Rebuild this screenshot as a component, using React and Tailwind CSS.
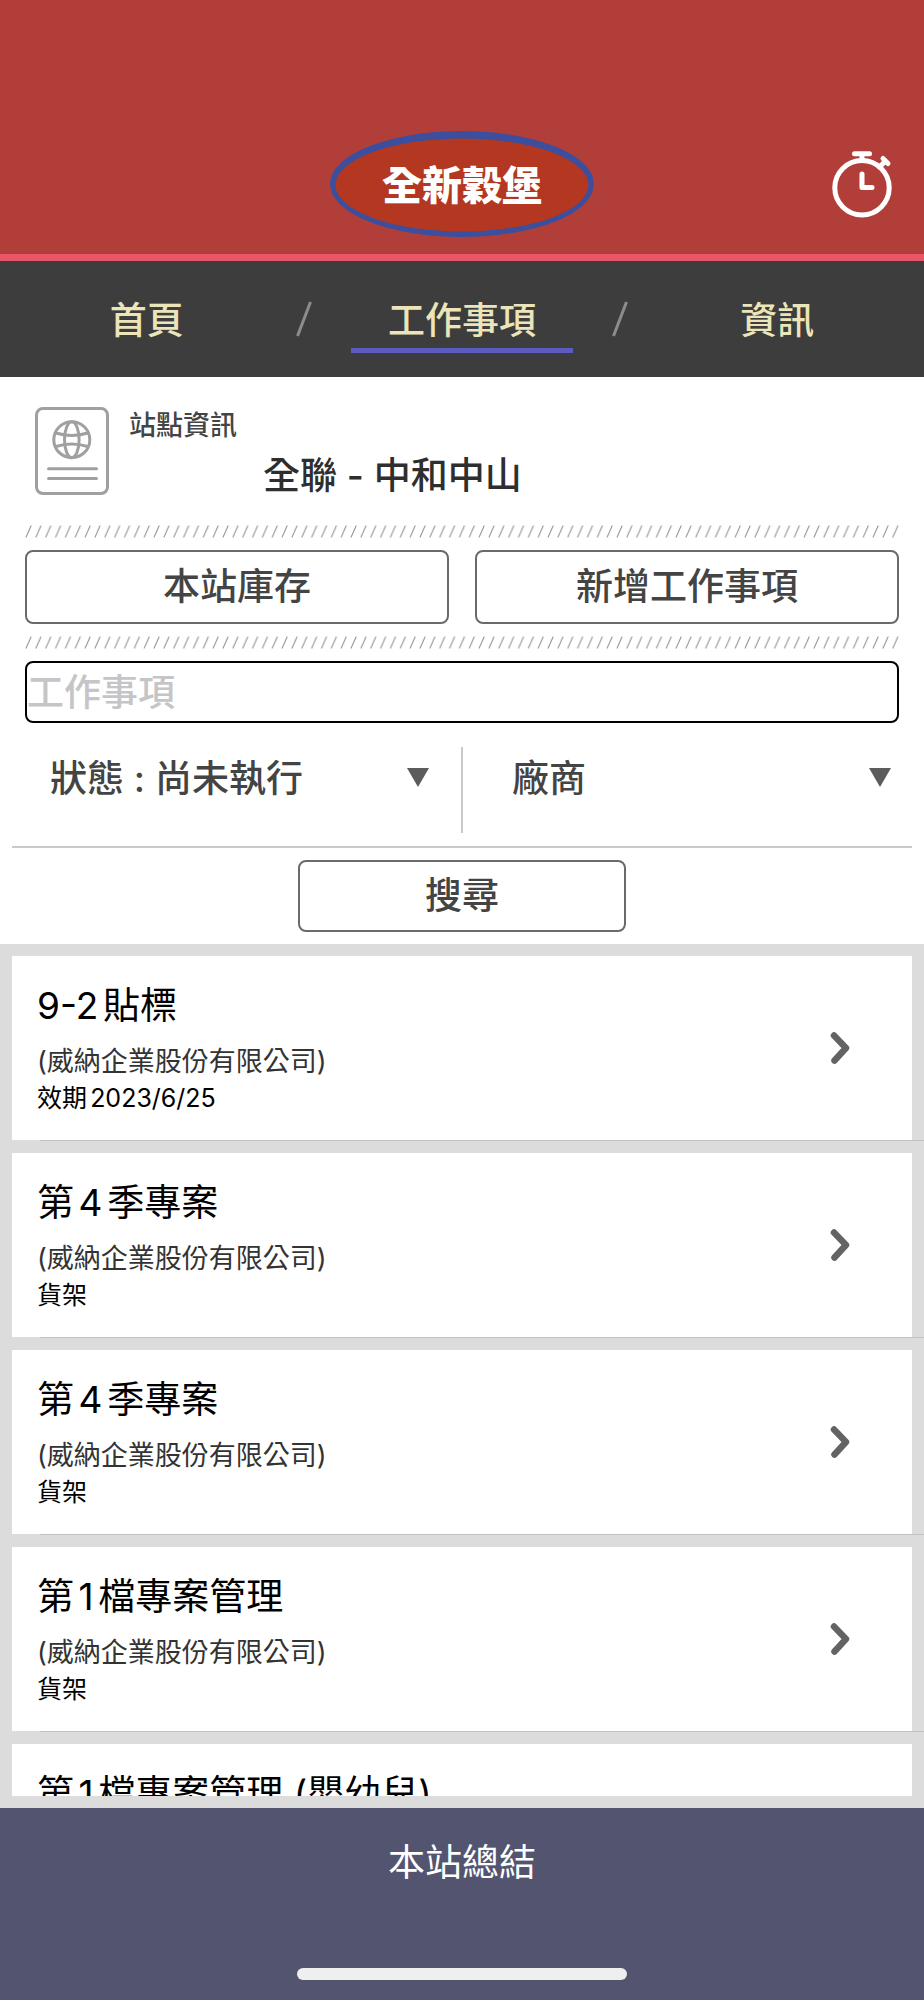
import React from "react";

const tasks = [
  { title: "9-2貼標", company: "(威納企業股份有限公司)", note: "效期2023/6/25" },
  { title: "第4季專案", company: "(威納企業股份有限公司)", note: "貨架" },
  { title: "第4季專案", company: "(威納企業股份有限公司)", note: "貨架" },
  { title: "第1檔專案管理", company: "(威納企業股份有限公司)", note: "貨架" },
  { title: "第1檔專案管理 (嬰幼兒)", company: "(威納企業股份有限公司)", note: "貨架" },
];

function Logo() {
  return (
    <svg width="266" height="108" viewBox="0 0 266 108" role="img" aria-label="全新穀堡">
      <ellipse cx="133" cy="54" rx="132" ry="53" fill="#3b4f9e" />
      <ellipse cx="133" cy="55" rx="126.500" ry="46.500" fill="#b43721" />
      <text
        x="133"
        y="70"
        textAnchor="middle"
        fill="#fff"
        fontSize="40"
        fontWeight="900"
      >
        全新穀堡
      </text>
    </svg>
  );
}

function Stopwatch() {
  return (
    <svg width="60" height="67" viewBox="0 0 60 67" fill="none" stroke="#fff" strokeWidth="5" strokeLinecap="round" strokeLinejoin="round" aria-hidden="true">
      <circle cx="30" cy="36.700" r="27.200" />
      <path d="M22.500 2.700H37.500M30 3v6" />
      <path d="M30 23v13.500h10" />
      <path d="M51 7.500l5 5M53.500 10l-6 6" strokeWidth="5" />
    </svg>
  );
}

function SiteIcon() {
  return (
    <svg width="74" height="88" viewBox="0 0 74 88" fill="none" stroke="#a0a0a0" strokeWidth="3" strokeLinecap="round" className="shrink-0" aria-hidden="true">
      <rect x="1.500" y="1.500" width="71" height="85" rx="6.500" />
      <circle cx="36.800" cy="32.700" r="18" />
      <ellipse cx="36.800" cy="32.700" rx="7.300" ry="18" />
      <path d="M21 26c9.500 3 22 3 31.600 0M21 39.500c9.500-3 22-3 31.600 0" />
      <path d="M13.500 61.700h48M13.500 71.500h48" />
    </svg>
  );
}

function Hatch({ id }) {
  return (
    <svg className="block h-[13px] w-full" aria-hidden="true">
      <defs>
        <pattern id={id} width="9.850" height="13" patternUnits="userSpaceOnUse">
          <path d="M.9 12.500L6.200.5" stroke="#8f8f8f" strokeWidth="1" fill="none" />
        </pattern>
      </defs>
      <rect width="100%" height="13" fill={`url(#${id})`} />
    </svg>
  );
}

function Filter({ label, options }) {
  return (
    <div className="relative flex-1">
      <select
        aria-label={label}
        className="h-[64px] w-full appearance-none bg-transparent pl-[50px] pr-16 font-medium text-[#444] outline-none"
      >
        {options.map((o) => (
          <option key={o}>{o}</option>
        ))}
      </select>
      <svg className="pointer-events-none absolute right-[33px] top-[21px]" width="22" height="19" viewBox="0 0 22 19" aria-hidden="true">
        <path d="M0 0h22L11 19z" fill="#5c5c5c" />
      </svg>
    </div>
  );
}

function TaskRow({ task }) {
  return (
    <li>
      <a href="#task" className="mx-3 flex h-[184px] items-center justify-between bg-white pl-[25px] pr-[62px]">
        <span className="flex flex-col pt-1 [text-autospace:normal]">
          <span className="mb-3.5 text-[37px] leading-[46px] text-black">{task.title}</span>
          <span className="text-[27px] leading-[37px] text-[#333]">{task.company}</span>
          <span className="text-[25px] leading-[37px] text-black">{task.note}</span>
        </span>
        <svg width="20" height="34" viewBox="0 0 20 34" fill="none" stroke="#636363" strokeWidth="6.500" strokeLinecap="round" strokeLinejoin="round" aria-hidden="true">
          <path d="M4 4.500L16 17 4.500 29.500" />
        </svg>
      </a>
      <div className="ml-10 h-px bg-[#c2c2c2]" />
    </li>
  );
}

function NavSlash() {
  return (
    <svg width="22" height="36" viewBox="0 0 22 36" className="shrink-0" aria-hidden="true">
      <path d="M4.500 35L17.500 1" stroke="#8c8c8c" strokeWidth="3" />
    </svg>
  );
}

const buttonStyle = "rounded-lg border-2 border-[#6a6a6a] bg-white font-medium text-[#444]";

export default function App() {
  return (
    <div className="flex h-screen flex-col bg-white font-[Inter,'Noto_Sans_CJK_TC',sans-serif] text-[37px] leading-[46px]">
      <header className="grid grid-cols-[1fr_auto_1fr] items-center border-b-[7px] border-[#e9566a] bg-[#b23e3a] pb-4 pt-[130px]">
        <span className="col-start-2">
          <Logo />
        </span>
        <button type="button" aria-label="打卡" className="mr-8 justify-self-end">
          <Stopwatch />
        </button>
      </header>

      <nav className="flex h-[116px] shrink-0 items-center bg-[#3d3d3d] font-medium text-[#ebe5b9]">
        <a href="#home" className="flex-1 border-b-[5px] border-transparent pb-1 pt-3 text-center">首頁</a>
        <NavSlash />
        <div className="flex flex-1 justify-center">
          <a href="#tasks" aria-current="page" className="border-b-[5px] border-[#5b5bc0] px-[37px] pb-1 pt-3">工作事項</a>
        </div>
        <NavSlash />
        <a href="#info" className="flex-1 border-b-[5px] border-transparent pb-1 pt-3 text-center">資訊</a>
      </nav>

      <main className="flex min-h-0 flex-1 flex-col">
        <section className="px-[25px] pt-[30px]">
          <div className="flex gap-5 pl-2.5">
            <SiteIcon />
            <div>
              <p className="text-[27px] font-medium leading-[38px] text-[#444]">站點資訊</p>
              <h1 className="mt-2 pl-[134px] font-medium text-[#2e2e2e]">全聯 - 中和中山</h1>
            </div>
          </div>
          <div className="mt-[26px]">
            <Hatch id="hatch-top" />
          </div>
          <div className="my-3 grid grid-cols-2 gap-[26px]">
            <button type="button" className={`h-[74px] ${buttonStyle}`}>本站庫存</button>
            <button type="button" className={`h-[74px] ${buttonStyle}`}>新增工作事項</button>
          </div>
          <Hatch id="hatch-bottom" />
          <input
            type="text"
            aria-label="工作事項"
            placeholder="工作事項"
            className="mt-3 block h-[62px] w-full rounded-lg border-2 border-black font-medium text-[#444] outline-none placeholder:text-[#c5c5c7]"
          />
        </section>

        <section className="mt-6 flex h-[86px] shrink-0">
          <Filter label="狀態" options={["狀態 : 尚未執行"]} />
          <div className="-mx-px w-0.5 bg-[#c9c9c9]" />
          <Filter label="廠商" options={["廠商"]} />
        </section>
        <hr className="mx-3 mt-[13px] border-t-2 border-[#c9c9c9]" />
        <button type="button" className={`my-3 h-[72px] w-[328px] shrink-0 self-center ${buttonStyle}`}>搜尋</button>

        <div className="flex min-h-0 flex-1 flex-col bg-[#dcdcdc] py-3">
          <ul className="flex min-h-0 flex-1 flex-col gap-3 overflow-y-auto [scrollbar-width:none]">
            {tasks.map((task, i) => (
              <TaskRow key={i} task={task} />
            ))}
          </ul>
        </div>
      </main>

      <footer className="flex shrink-0 flex-col items-center bg-[#53546f] pb-5 pt-8">
        <button type="button" className="mb-[82px] text-white">本站總結</button>
        <div className="h-3 w-[330px] rounded-full bg-[#efefef]" />
      </footer>
    </div>
  );
}
